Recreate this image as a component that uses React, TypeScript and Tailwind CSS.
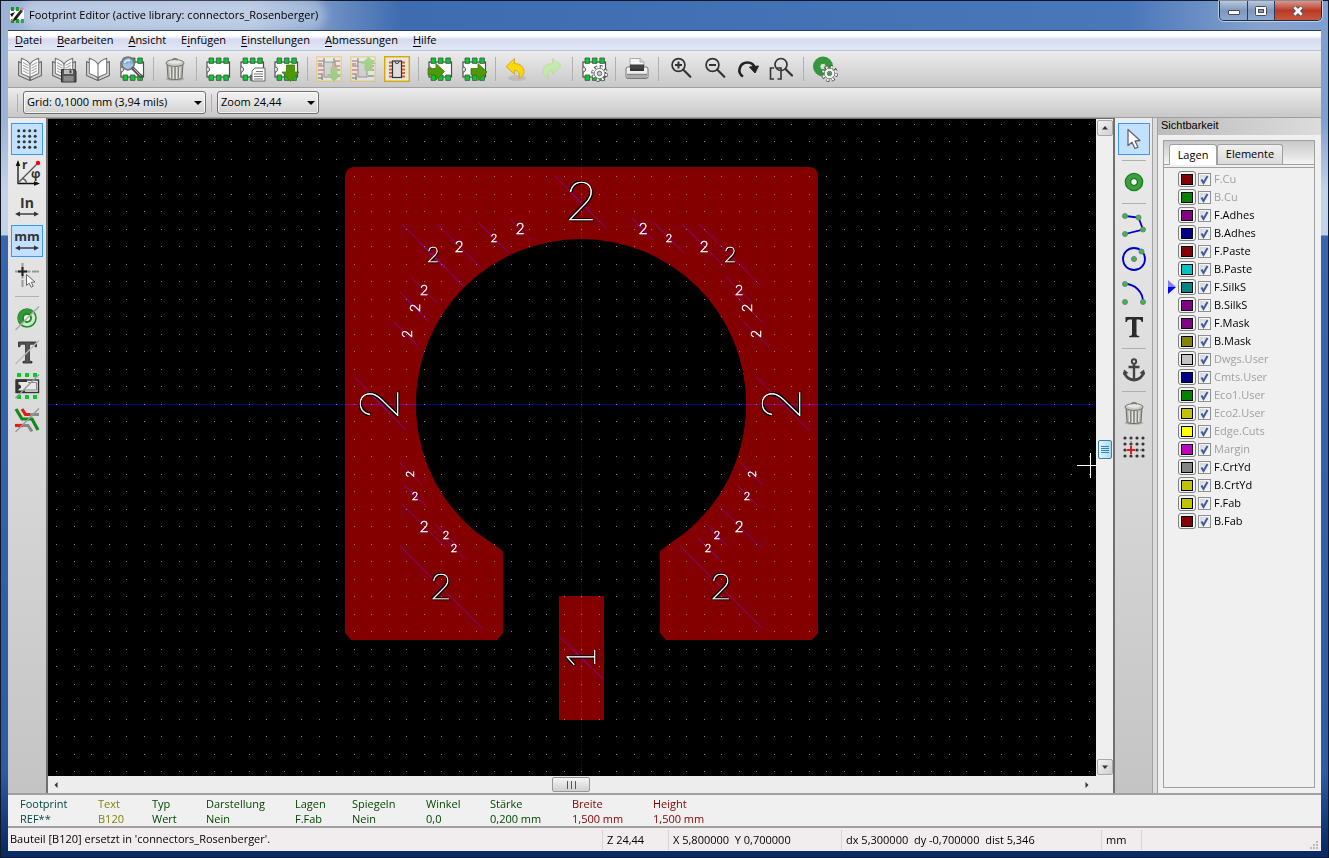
import { useState } from "react";
import type { ReactNode } from "react";
import clsx from "clsx";

/* ---------- icons ---------- */

function Icon({ children, className }: { children: ReactNode; className?: string }) {
  return (
    <svg viewBox="0 0 26 26" className={clsx("h-[26px] w-[26px] shrink-0 overflow-visible", className)} fill="none" aria-hidden="true">
      {children}
    </svg>
  );
}

function ChipShape() {
  return (
    <>
      <rect x="2" y="6" width="22.5" height="15" fill="#fff" stroke="#4d4d4d" strokeWidth="1.2" />
      <path d="M2 11c2 0 2.6 1 2.6 2.3S4 16 2 16" fill="#d8d8d8" stroke="#4d4d4d" />
      <path d="M4 2h4.6v5.4H4zM11.4 2H16v5.4h-4.6zM18.8 2h4.6v5.4h-4.6zM4 19h4.6v5.4H4zM11.4 19H16v5.4h-4.6zM18.8 19h4.6v5.4h-4.6z" fill="#00cc2a" stroke="#4d4d4d" strokeWidth="0.8" />
    </>
  );
}

function BookShape({ lines = false }: { lines?: boolean }) {
  return (
    <>
      <path d="M1.6 5.5 12.8 11v13.5L1.6 19.5zM24.4 5.5 13.2 11v13.5l11.2-5z" fill="#d8d8d8" stroke="#666" strokeWidth="1.1" strokeLinejoin="round" />
      <path d="M4.3 2.2C7 3.500 11 4 13 8.500V22C10.500 19.500 7 18.500 4.300 17.500zM21.700 2.200C19 3.500 15 4 13 8.500V22c2.500-2.500 6-3.500 8.700-4.500z" fill="#fff" stroke="#777" strokeWidth="1.1" strokeLinejoin="round" />
      {lines && (
        <path d="m6 6.500 5.500 3M6 9.300l5.500 3M6 12l5.500 3M6 14.700l5.500 3M20 6.500l-5.500 3M20 9.300l-5.500 3M20 12l-5.500 3M20 14.700l-5.500 3" stroke="#aaa" strokeWidth="1.100" />
      )}
    </>
  );
}

function TrashShape() {
  return (
    <>
      <ellipse cx="13" cy="23" rx="9.5" ry="1.8" fill="#888" opacity=".5" />
      <path d="M5 7.500 6 22c1 2 13 2 14 0l1-14.500z" fill="#b0b0a9" stroke="#6d6d68" />
      <path d="M8 10.500 8.500 22M11.300 11l.2 12M14.800 11l-.2 12M18 10.500 17.500 22" stroke="#e4e4e0" strokeWidth="1.300" />
      <path d="M9.700 11v11.500M13 11v12M16.400 11v11.500" stroke="#777" strokeWidth="1" />
      <ellipse cx="13" cy="7" rx="9" ry="3.400" fill="#cacac4" stroke="#74746f" />
      <ellipse cx="13" cy="6" rx="6.500" ry="1.800" fill="#e6e6e2" />
      <path d="M10.500 4.200c0-2 5-2 5 0" stroke="#777" strokeWidth="1.200" />
    </>
  );
}

function GearShape({ x, y }: { x: number; y: number }) {
  return (
    <g transform={`translate(${x} ${y})`}>
      <circle r="6.600" stroke="#555" strokeWidth="3.600" strokeDasharray="3 2.184" />
      <circle r="6.300" stroke="#f4f4f4" strokeWidth="2.600" strokeDasharray="1.900 3.048" strokeDashoffset="-.5" />
      <circle r="5" fill="#f4f4f4" stroke="#666" strokeWidth="1" />
      <circle r="4.800" fill="#f4f4f4" />
      <circle r="2.200" fill="#c8c8c8" stroke="#666" />
    </g>
  );
}

const greenArrow = { fill: "#4e9a06", stroke: "#3c7a04", strokeWidth: 0.8 };

function ModuleShape() {
  return (
    <>
      <rect x=".8" y=".8" width="24.400" height="24.400" fill="#f3f1e8" stroke="#e5c14d" strokeWidth="1.400" />
      <path d="M2 5h6v5H2M2 14h6M2 18h4v6M24 5h-5v5h5M24 14h-6" stroke="#c83737" strokeWidth="1.600" />
      <path d="M2 8h4M2 22h5M18 2v5M24 20h-6M8 2v3" stroke="#217844" strokeWidth="1.400" />
      <rect x="8" y="6" width="9" height="15" fill="#ccc" stroke="#555" />
    </>
  );
}

function Loupe({ children }: { children?: ReactNode }) {
  return (
    <Icon>
      <circle cx="11.500" cy="9" r="6.400" stroke="#333" strokeWidth="1.700" />
      <path d="m16.300 13.800 7 7" stroke="#333" strokeWidth="2.200" strokeLinecap="round" />
      {children}
    </Icon>
  );
}

const icons = {
  bookOpen: <Icon><BookShape lines /></Icon>,
  bookSave: (
    <Icon>
      <BookShape lines />
      <path d="M10.500 13.500h13.200L25 15v11H10.500z" fill="#555" stroke="#2e2e2e" />
      <path d="M13 13.500h9v4.500h-9z" fill="#bbb" />
      <path d="M18.500 14.200h2v3h-2z" fill="#444" />
      <path d="M12.500 20h10v5.500h-10z" fill="#8a8a8a" />
    </Icon>
  ),
  bookNew: <Icon><BookShape /></Icon>,
  browse: (
    <Icon>
      <ChipShape />
      <circle cx="9" cy="7.500" r="6.300" fill="#8fb8e0" fillOpacity=".85" stroke="#777" strokeWidth="1.700" />
      <path d="M5.500 7c.5-2.600 4-3.400 5.500-2" stroke="#e8f2fc" strokeWidth="1.500" />
      <path d="m14 12.500 8 8" stroke="#555" strokeWidth="3.400" strokeLinecap="round" />
      <path d="m14.500 12.500 7 7" stroke="#bbb" strokeWidth="1" />
    </Icon>
  ),
  trash: <Icon><TrashShape /></Icon>,
  chip: <Icon><ChipShape /></Icon>,
  chipDoc: (
    <Icon>
      <ChipShape />
      <path d="M16 12h10v13H13V15z" fill="#fff" stroke="#666" />
      <path d="M17 15.500h7M15 18h9M15 20.500h9M15 23h9" stroke="#777" />
    </Icon>
  ),
  chipDown: <Icon><ChipShape /><path d="M13.500 9h8v7H26L17.500 25.500 9 16h4.500z" {...greenArrow} /></Icon>,
  loadBoard: (
    <Icon className="opacity-50">
      <ModuleShape />
      <path d="M14.500 11h7v7h4L18 25.500 10.500 18h4z" fill="#6fc437" />
    </Icon>
  ),
  saveBoard: (
    <Icon className="opacity-50">
      <ModuleShape />
      <path d="M14.500 15h8V8H26L18.500.5 11 8h3.500z" fill="#6fc437" />
    </Icon>
  ),
  module: (
    <Icon>
      <rect x=".7" y=".7" width="24.600" height="24.600" fill="#e8e6de" stroke="#d4aa00" strokeWidth="1.400" />
      <path d="M5 6.500h3.500M5 10h3.500M5 13.500h3.500M5 17h3.500M5 20.500h3.500M17.500 6.500H21M17.500 10H21M17.500 13.500H21M17.500 17H21M17.500 20.500H21" stroke="#e0602c" strokeWidth="2" />
      <rect x="8.500" y="5" width="9" height="16.500" fill="#ddd" stroke="#333" strokeWidth="1.200" />
      <path d="M11 5.500a2 2 0 0 0 4 0" stroke="#333" />
    </Icon>
  ),
  chipIn: <Icon><ChipShape /><path d="M1 12.500h8V7.500l8.500 8L9 24v-5H1z" {...greenArrow} /></Icon>,
  chipOut: <Icon><ChipShape /><path d="M10 12.500h7V7.500l9 8.500-9 8.500V19h-7z" {...greenArrow} /></Icon>,
  undo: (
    <Icon>
      <ellipse cx="13" cy="22" rx="9" ry="3" fill="#999" opacity=".35" />
      <path d="M2 10.500 10.500 2.500v5c6 .3 9.500 3.500 9.500 8 0 3-2 5.500-5.500 7 1.500-2 1.500-8-4-8.200v4z" fill="#f5d90a" stroke="#d9a82e" strokeLinejoin="round" />
    </Icon>
  ),
  redo: (
    <Icon className="opacity-60">
      <path d="M23 9.500 14.500 2.500v5C8.500 7.800 5 11 5 15.500c0 3 2 5.500 5.500 7C9 20.500 9 14.500 14.500 14.300v3.500z" fill="#b5f58c" stroke="#a0dd80" strokeLinejoin="round" />
    </Icon>
  ),
  chipGear: <Icon><ChipShape /><GearShape x={18.5} y={17.5} /></Icon>,
  print: (
    <Icon>
      <path d="M6 11V2.500h10l4 3.500v5z" fill="#f6f6f6" stroke="#aaa" />
      <path d="M16 2.500V6h4" stroke="#aaa" fill="#ddd" />
      <rect x="2" y="11" width="22" height="11.500" rx="2" fill="#eee" stroke="#777" />
      <path d="M6 8.500h14V15H6z" fill="#333" />
      <path d="M6.500 10h13M6.500 12h13" stroke="#666" strokeWidth=".7" />
      <path d="M3 18.500h20v3.500H3z" fill="#aaa" />
      <path d="M3 18.300h20" stroke="#777" />
    </Icon>
  ),
  zoomIn: <Loupe><path d="M8 9h7M11.500 5.500v7" stroke="#333" strokeWidth="2" /></Loupe>,
  zoomOut: <Loupe><path d="M8 9h7" stroke="#333" strokeWidth="2" /></Loupe>,
  redraw: (
    <Icon>
      <path d="M8 20.500C1.500 16.500 4.500 6.500 12.500 6.500c4 0 6.500 2 7.500 6" stroke="#222" strokeWidth="2.600" />
      <path d="m14.500 11 9-1-3.500 7z" fill="#222" stroke="#222" />
    </Icon>
  ),
  zoomFit: (
    <Icon>
      <circle cx="12" cy="8.500" r="6" stroke="#333" strokeWidth="1.700" />
      <path d="m16.500 13 6.500 6.500" stroke="#333" strokeWidth="2.200" strokeLinecap="round" />
      <path d="M5 12H1.500v11H5M8 12h4v11H8.500" stroke="#333" strokeWidth="1.600" />
    </Icon>
  ),
  padGear: (
    <Icon>
      <circle cx="11" cy="10.500" r="6.500" stroke="#35963c" strokeWidth="7" />
      <circle cx="11" cy="10.500" r="3.200" fill="#cfe8cf" stroke="#35963c" />
      <GearShape x={17.5} y={17.5} />
      <circle cx="17.500" cy="17.500" r="1.500" fill="#35963c" />
    </Icon>
  ),
  grid: (
    <Icon>
      {[5, 10.5, 16, 21.5].flatMap((y) =>
        [5, 10.5, 16, 21.5].map((x) => <circle key={`${x}-${y}`} cx={x - 0.3} cy={y - 0.3} r="1.500" fill="#333" />),
      )}
    </Icon>
  ),
  polar: (
    <Icon>
      <path d="M4 2v21.500h20" stroke="#111" strokeWidth="1.300" />
      <path d="M4 0 1.700 6h4.600zM26 23.500l-6-2.300v4.600z" fill="#111" />
      <path d="M4 23 22.500 4.500M8 18.500c2.500.5 4.300 2.300 4.500 5" stroke="#555" strokeWidth="1.300" />
      <circle cx="24" cy="3" r="2.200" fill="#f00" />
      <text x="8" y="9" className="fill-[#333] font-['Open_Sans',sans-serif] text-[12px] font-bold">r</text>
      <text x="17" y="18" className="fill-[#333] font-['Open_Sans',sans-serif] text-[12px] font-bold">φ</text>
    </Icon>
  ),
  inch: (
    <Icon>
      <text x="13" y="14" textAnchor="middle" className="fill-[#333] font-['Open_Sans',sans-serif] text-[14px] font-bold">In</text>
      <path d="M4 20h18" stroke="#333" strokeWidth="1.400" />
      <path d="m1 20 5-2.600v5.200zM25 20l-5-2.600v5.200z" fill="#333" />
    </Icon>
  ),
  mm: (
    <Icon>
      <text x="13" y="13" textAnchor="middle" className="fill-[#333] font-['Open_Sans',sans-serif] text-[13px] font-bold">mm</text>
      <path d="M4 20h18" stroke="#333" strokeWidth="1.400" />
      <path d="m1 20 5-2.600v5.200zM25 20l-5-2.600v5.200z" fill="#333" />
    </Icon>
  ),
  cursorShape: (
    <Icon>
      <path d="M1 9.500h24M8.500 1v24" stroke="#999" strokeWidth="2" strokeDasharray="7 1.500" />
      <path d="M4 9.500h9M8.500 5v9" stroke="#222" strokeWidth="2" />
      <path d="M12.500 12.500v11l2.700-2.300 2 4 2-1-2-4 3.800-.2z" fill="#fff" stroke="#666" />
    </Icon>
  ),
  padOff: (
    <Icon>
      <circle cx="13" cy="13" r="9" fill="#cfe8cf" stroke="#16901c" strokeWidth="1.500" />
      <path d="M6.500 19.500A9 9 0 0 1 19.500 6.500z" fill="#35963c" />
      <circle cx="13" cy="13" r="4" fill="#fff" stroke="#16901c" strokeWidth="2" />
      <path d="M1.500 25 25 1.500" stroke="#aaa" strokeWidth="1.500" />
    </Icon>
  ),
  textOff: (
    <Icon>
      <path d="M4.500 3h18v4.800h-1.300c-.4-2-1-2.600-2.800-2.600h-3V20c0 2 .6 2.400 2.600 2.500V24H9v-1.500c2-.1 2.600-.5 2.600-2.500V5.200h-3c-1.800 0-2.400.6-2.800 2.600H4.500z" fill="#555" stroke="#222" strokeWidth=".8" />
      <path d="M1.500 25 25 1.500" stroke="#bbb" strokeWidth="1.500" />
    </Icon>
  ),
  edgeOff: (
    <Icon>
      <path d="M3 0h4v4H3zM11 0h4v4h-4zM19 0h4v4h-4zM3 22h4v4H3zM11 22h4v4h-4zM19 22h4v4h-4z" fill="#00cc2a" />
      <rect x="2" y="7" width="22.500" height="12.500" fill="#e8e8e8" stroke="#333" strokeWidth="1.400" />
      <path d="M2 6.500h11V9H4.500v2.500c3.500 0 3.500 4.500 0 4.500v1.500H11v2H2z" fill="#333" />
      <path d="M14 9.500h8.500V17H10" stroke="#888" />
      <path d="M1.500 25 25 1.500" stroke="#999" strokeWidth="1.500" />
    </Icon>
  ),
  tracksOff: (
    <Icon>
      <path d="m2 2 6 10h10l6 11" stroke="#128a18" strokeWidth="3.200" />
      <path d="m8 2 3.500 5.500H16" stroke="#e21b1b" strokeWidth="3.200" />
      <path d="M16 7.500h9" stroke="#888" strokeWidth="3" />
      <path d="M1 18.500h8" stroke="#e21b1b" strokeWidth="3.200" />
      <path d="M9 18.500h5l4 6" stroke="#888" strokeWidth="3" />
      <path d="M1.500 25 25 1.500" stroke="#999" strokeWidth="1.500" />
    </Icon>
  ),
  pointer: (
    <Icon>
      <path d="M7 3.500v16l4-3.300 3 6.300 3-1.300-3-6.200 5-.5z" fill="#fff" stroke="#666" strokeWidth="1.300" strokeLinejoin="round" />
    </Icon>
  ),
  pad: (
    <Icon>
      <circle cx="13" cy="13" r="6" stroke="#16801c" strokeWidth="6.600" />
      <circle cx="13" cy="13" r="6" stroke="#3f9e43" strokeWidth="4" />
      <circle cx="13" cy="13" r="2.400" fill="#fff" />
    </Icon>
  ),
  polygon: (
    <Icon>
      <path d="m4 4 13.500 1.500L22 17.500 4 22" stroke="#00c" strokeWidth="1.800" />
      {[[4, 4], [17.5, 5.5], [22, 17.5], [4, 22]].map(([x, y]) => (
        <circle key={y} cx={x} cy={y} r="2.500" fill="#2fbf4a" stroke="#777" strokeWidth=".9" />
      ))}
    </Icon>
  ),
  circle: (
    <Icon>
      <circle cx="13" cy="13" r="11" stroke="#00c" strokeWidth="1.800" />
      <circle cx="13" cy="13" r="2.500" fill="#2fbf4a" stroke="#777" />
      <circle cx="20.500" cy="5.500" r="2.500" fill="#2fbf4a" stroke="#777" />
    </Icon>
  ),
  arc: (
    <Icon>
      <path d="M4 4c10 0 18 8 18 18" stroke="#00c" strokeWidth="1.800" />
      {[[4, 4], [22, 22], [4, 22]].map(([x, y]) => (
        <circle key={`${x}-${y}`} cx={x} cy={y} r="2.500" fill="#2fbf4a" stroke="#777" strokeWidth=".9" />
      ))}
    </Icon>
  ),
  text: (
    <Icon>
      <path d="M4.500 3h17.500v5h-1.400c-.5-2-1-2.600-2.800-2.600h-2.300V19.500c0 2 .5 2.400 2.800 2.500v1.300H8.200V22c2.300-.1 2.800-.5 2.800-2.500V5.400H8.700c-1.800 0-2.300.6-2.800 2.600H4.500z" fill="#2b2b2b" />
    </Icon>
  ),
  anchor: (
    <Icon>
      <circle cx="13" cy="4.500" r="2.200" stroke="#444" strokeWidth="1.900" />
      <path d="M13 7v16M7.500 10h11" stroke="#444" strokeWidth="2.400" />
      <path d="M3.500 15c.8 5 5 8 9.500 8s8.700-3 9.500-8" stroke="#444" strokeWidth="2.800" />
      <path d="m2 18 1-5.500L7.500 16zM24 18l-1-5.500L18.500 16z" fill="#444" />
    </Icon>
  ),
  gridOrigin: (
    <Icon>
      {[4, 10, 16, 22].flatMap((y) =>
        [4, 10, 16, 22].map((x) => <circle key={`${x}-${y}`} cx={x} cy={y} r="1.600" fill="#333" />),
      )}
      <path d="M10 4v16M10 16h12" stroke="#555" strokeWidth="1" strokeDasharray="1 2" />
      <path d="M6 16h8M10 12v8" stroke="#e21b1b" strokeWidth="2" />
    </Icon>
  ),
};

type IconName = keyof typeof icons;
type Tool = { icon: IconName; label: string } | null;

/* ---------- data ---------- */

const menus = ["Datei", "Bearbeiten", "Ansicht", "Einfügen", "Einstellungen", "Abmessungen", "Hilfe"];
// position of the underlined access key in each menu title
const accessKeys = [0, 0, 0, 1, 0, 0, 0];

const mainTools: Tool[] = [
  { icon: "bookOpen", label: "Aktive Bibliothek wählen" },
  { icon: "bookSave", label: "In aktive Bibliothek speichern" },
  { icon: "bookNew", label: "Neue Bibliothek" },
  { icon: "browse", label: "Footprint Betrachter" },
  null,
  { icon: "trash", label: "Bauteil löschen" },
  null,
  { icon: "chip", label: "Neuer Footprint" },
  { icon: "chipDoc", label: "Footprint Assistent" },
  { icon: "chipDown", label: "Footprint laden" },
  null,
  { icon: "loadBoard", label: "Von Platine laden" },
  { icon: "saveBoard", label: "Auf Platine aktualisieren" },
  { icon: "module", label: "Auf Platine einfügen" },
  null,
  { icon: "chipIn", label: "Importieren" },
  { icon: "chipOut", label: "Exportieren" },
  null,
  { icon: "undo", label: "Rückgängig" },
  { icon: "redo", label: "Wiederholen" },
  null,
  { icon: "chipGear", label: "Footprint Eigenschaften" },
  null,
  { icon: "print", label: "Drucken" },
  null,
  { icon: "zoomIn", label: "Vergrößern" },
  { icon: "zoomOut", label: "Verkleinern" },
  { icon: "redraw", label: "Neu zeichnen" },
  { icon: "zoomFit", label: "Zoom automatisch" },
  null,
  { icon: "padGear", label: "Pad Einstellungen" },
];

const leftTools: Tool[] = [
  { icon: "grid", label: "Raster" },
  { icon: "polar", label: "Polarkoordinaten" },
  { icon: "inch", label: "Zoll" },
  { icon: "mm", label: "Millimeter" },
  { icon: "cursorShape", label: "Cursorform" },
  null,
  { icon: "padOff", label: "Pads umrisshaft" },
  { icon: "textOff", label: "Texte umrisshaft" },
  { icon: "edgeOff", label: "Kanten umrisshaft" },
  { icon: "tracksOff", label: "Kontrastmodus" },
];

const rightTools: Tool[] = [
  { icon: "pointer", label: "Auswahl" },
  null,
  { icon: "pad", label: "Pad hinzufügen" },
  null,
  { icon: "polygon", label: "Linie" },
  { icon: "circle", label: "Kreis" },
  { icon: "arc", label: "Bogen" },
  { icon: "text", label: "Text" },
  null,
  { icon: "anchor", label: "Anker" },
  null,
  { icon: "trash", label: "Löschen" },
  { icon: "gridOrigin", label: "Rasterursprung" },
];

const layers = [
  { name: "F.Cu", color: "bg-[#840000]", dim: true },
  { name: "B.Cu", color: "bg-[#008400]", dim: true },
  { name: "F.Adhes", color: "bg-[#840084]" },
  { name: "B.Adhes", color: "bg-[#000084]" },
  { name: "F.Paste", color: "bg-[#840000]" },
  { name: "B.Paste", color: "bg-[#00c2c2]" },
  { name: "F.SilkS", color: "bg-[#008484]" },
  { name: "B.SilkS", color: "bg-[#840084]" },
  { name: "F.Mask", color: "bg-[#840084]" },
  { name: "B.Mask", color: "bg-[#848400]" },
  { name: "Dwgs.User", color: "bg-[#c2c2c2]", dim: true },
  { name: "Cmts.User", color: "bg-[#000084]", dim: true },
  { name: "Eco1.User", color: "bg-[#008400]", dim: true },
  { name: "Eco2.User", color: "bg-[#c2c200]", dim: true },
  { name: "Edge.Cuts", color: "bg-[#ffff00]", dim: true },
  { name: "Margin", color: "bg-[#c200c2]", dim: true },
  { name: "F.CrtYd", color: "bg-[#848484]" },
  { name: "B.CrtYd", color: "bg-[#c2c200]" },
  { name: "F.Fab", color: "bg-[#c2c200]" },
  { name: "B.Fab", color: "bg-[#840000]" },
];

const messages = [
  { label: "Footprint", value: "REF**", className: "w-[78px] text-[#004848]" },
  { label: "Text", value: "B120", className: "w-[54px] text-[#848400]" },
  { label: "Typ", value: "Wert", className: "w-[54px] text-[#004800]" },
  { label: "Darstellung", value: "Nein", className: "w-[89px] text-[#004800]" },
  { label: "Lagen", value: "F.Fab", className: "w-[57px] text-[#004800]" },
  { label: "Spiegeln", value: "Nein", className: "w-[74px] text-[#004800]" },
  { label: "Winkel", value: "0,0", className: "w-[64px] text-[#004800]" },
  { label: "Stärke", value: "0,200 mm", className: "w-[82px] text-[#004800]" },
  { label: "Breite", value: "1,500 mm", className: "w-[81px] text-[#840000]" },
  { label: "Height", value: "1,500 mm", className: "w-[82px] text-[#840000]" },
];

// diagonal "no net" marks across each pad: x1, y1, x2, y2
const netMarks = [
  [555, 176, 607, 229], [402, 224, 463, 286], [437, 224, 481, 268], [478, 222, 509, 253], [509, 218, 531, 240],
  [411, 277, 437, 303], [400, 292, 430, 323], [393, 321, 419, 347], [354, 377, 406, 430],
  [632, 218, 653, 240], [653, 222, 684, 253], [682, 224, 726, 268], [699, 224, 761, 286],
  [726, 277, 752, 303], [732, 292, 763, 323], [743, 321, 769, 347], [756, 377, 809, 430],
  [400, 463, 422, 485], [404, 485, 426, 506], [402, 504, 446, 548], [435, 524, 457, 546], [443, 537, 465, 559], [400, 546, 483, 629],
  [741, 463, 763, 485], [737, 485, 758, 506], [717, 504, 761, 548], [706, 524, 727, 546], [697, 537, 719, 559], [680, 546, 763, 629],
  [559, 636, 603, 679],
];

// pad numbers: centre, digit height, turned or not
const padNumbers: { n: string; x: number; y: number; h: number; turned?: boolean }[] = [
  { n: "2", x: 581, y: 201, h: 38 },
  { n: "2", x: 379, y: 404, h: 38, turned: true },
  { n: "2", x: 781, y: 404, h: 38, turned: true },
  { n: "2", x: 441, y: 586, h: 26 },
  { n: "2", x: 721, y: 586, h: 26 },
  { n: "1", x: 581, y: 658, h: 28, turned: true },
  { n: "2", x: 433, y: 254, h: 15 },
  { n: "2", x: 730, y: 254, h: 15 },
  { n: "2", x: 459, y: 246, h: 11 },
  { n: "2", x: 704, y: 246, h: 11 },
  { n: "2", x: 494, y: 238, h: 8 },
  { n: "2", x: 669, y: 238, h: 8 },
  { n: "2", x: 520, y: 228, h: 11 },
  { n: "2", x: 643, y: 228, h: 11 },
  { n: "2", x: 424, y: 290, h: 10 },
  { n: "2", x: 739, y: 290, h: 10 },
  { n: "2", x: 415, y: 308, h: 10, turned: true },
  { n: "2", x: 747, y: 308, h: 10, turned: true },
  { n: "2", x: 407, y: 334, h: 9, turned: true },
  { n: "2", x: 756, y: 334, h: 9, turned: true },
  { n: "2", x: 410, y: 474, h: 8, turned: true },
  { n: "2", x: 752, y: 474, h: 8, turned: true },
  { n: "2", x: 415, y: 496, h: 8 },
  { n: "2", x: 747, y: 496, h: 8 },
  { n: "2", x: 424, y: 526, h: 11 },
  { n: "2", x: 739, y: 526, h: 11 },
  { n: "2", x: 446, y: 535, h: 8 },
  { n: "2", x: 717, y: 535, h: 8 },
  { n: "2", x: 454, y: 548, h: 8 },
  { n: "2", x: 708, y: 548, h: 8 },
];

/* ---------- parts ---------- */

function TitleBar() {
  return (
    <header className="flex h-[30px] shrink-0 items-start justify-between pl-2 pr-[6px]">
      <div className="flex h-7 items-center gap-1">
        <svg viewBox="0 0 16 16" className="h-4 w-4" aria-hidden="true">
          <rect x="1" y="3" width="14" height="10" fill="#fff" />
          <path d="M2 0h3v4H2zM7 0h3v4H7zM2 12h3v4H2zM7 12h3v4H7zM12 12h3v4h-3z" fill="#0a9a2a" />
          <path d="M1 7l5-2-3 5zM12 2l2 2-7 9-3 1 1-3z" fill="#111" />
          <path d="m11 2 2-2 2 2-2 2z" fill="#e86aa8" />
          <path d="m1 15 3-4 1 1z" fill="#e0b050" />
        </svg>
        <h1 className="rounded-full bg-white/30 text-[11px] text-black shadow-[0_0_10px_8px_rgba(255,255,255,0.3)]">
          Footprint Editor (active library: connectors_Rosenberger)
        </h1>
      </div>
      <div className="flex h-5 overflow-hidden rounded-b-[5px] border border-t-0 border-[#1c2c4a] shadow-[0_0_0_1px_rgba(255,255,255,0.5)]">
        <button aria-label="Minimieren" className="flex w-7 items-center justify-center border-r border-[#2a3d60] bg-linear-to-b from-[#b9c9e0] via-[#7d97be] to-[#8ea9cf]">
          <span className="mt-1 h-[5px] w-3 rounded-[1px] border border-[#4a4a5a] bg-white" />
        </button>
        <button aria-label="Maximieren" className="flex w-[27px] items-center justify-center border-r border-[#2a3d60] bg-linear-to-b from-[#b9c9e0] via-[#7d97be] to-[#8ea9cf]">
          <svg viewBox="0 0 12 10" className="h-[10px] w-3" aria-hidden="true">
            <rect x=".5" y=".5" width="11" height="9" rx="1" fill="#fff" stroke="#4a4a5a" />
            <rect x="3.500" y="3.500" width="5" height="3" fill="#7d97be" stroke="#4a4a5a" />
          </svg>
        </button>
        <button aria-label="Schließen" className="flex w-[46px] items-center justify-center bg-linear-to-b from-[#d9968a] via-[#b83a26] to-[#c9573f]">
          <svg viewBox="0 0 12 10" className="h-[10px] w-3" aria-hidden="true">
            <path d="m2 1 8 8M10 1 2 9" stroke="#4a4a5a" strokeWidth="4.500" />
            <path d="m2.300 1.300 7.400 7.400M9.700 1.300 2.300 8.700" stroke="#fff" strokeWidth="2.800" />
          </svg>
        </button>
      </div>
    </header>
  );
}

function MenuBar() {
  return (
    <nav className="flex h-5 shrink-0 items-center gap-[15px] border-b border-[#b8c0d4] bg-linear-to-b from-white from-25% via-[#d6dcef] via-45% to-[#e2e8f6] px-[7px]">
      {menus.map((menu, i) => (
        <button key={menu}>
          {menu.slice(0, accessKeys[i])}
          <span className="underline underline-offset-2">{menu[accessKeys[i]]}</span>
          {menu.slice(accessKeys[i] + 1)}
        </button>
      ))}
    </nav>
  );
}

function Toolbar({ tools, vertical, active = [] }: { tools: Tool[]; vertical?: boolean; active?: IconName[] }) {
  return (
    <div role="toolbar" className={clsx("flex items-center", vertical && "flex-col")}>
      {tools.map((tool, i) =>
        tool ? (
          <button
            key={tool.icon}
            title={tool.label}
            aria-label={tool.label}
            className={clsx(
              "m-px flex h-8 w-8 items-center justify-center border",
              active.includes(tool.icon) ? "border-[#3399ff] bg-[#c2e0ff]" : "border-transparent",
            )}
          >
            {icons[tool.icon]}
          </button>
        ) : (
          <span key={i} className={vertical ? "my-1 h-px w-6 bg-[#b0b0b0]" : "mx-1 h-6 w-px bg-[#b0b0b0]"} />
        ),
      )}
    </div>
  );
}

function Dropdown({ label, options, className }: { label: string; options: string[]; className: string }) {
  return (
    <label className={clsx("relative block", className)}>
      <select
        aria-label={label}
        className="block h-[23px] w-full appearance-none rounded-[3px] border border-[#707070] bg-linear-to-b from-[#f4f4f4] to-[#d2d2d2] pl-[3px] text-[11px] shadow-[inset_0_0_0_1px_rgba(255,255,255,0.7)]"
      >
        {options.map((option) => (
          <option key={option}>{option}</option>
        ))}
      </select>
      <svg viewBox="0 0 8 4" className="pointer-events-none absolute right-1 top-[10px] h-1 w-2" aria-hidden="true">
        <path d="M0 0h8L4 4z" fill="#000" />
      </svg>
    </label>
  );
}

function PadNumber({ n, x, y, h, turned }: (typeof padNumbers)[number]) {
  return (
    <g
      transform={`translate(${x} ${y})${turned ? " rotate(-90)" : ""}`}
      className={clsx(
        h > 20 && "[filter:drop-shadow(1px_1px_0_#000)_drop-shadow(-1px_-1px_0_#000)]",
        h > 12 && h <= 20 && "[filter:drop-shadow(1px_1px_0_#000)]",
      )}
    >
      <text
        y={h / 2}
        textAnchor="middle"
        fontSize={Math.round(h / 0.72)}
        stroke="#fff"
        strokeWidth={h > 12 ? 0.6 : 0.4}
        className={clsx("fill-white font-['Lato',sans-serif]", h > 12 ? "font-extralight" : "font-light")}
      >
        {n}
      </text>
    </g>
  );
}

function Canvas() {
  return (
    <svg className="block min-h-0 min-w-0 flex-1 bg-black" role="img" aria-label="Footprint">
      <svg x="50%" overflow="visible">
        <g transform="translate(-572 -119)">
          <defs>
            <pattern id="dots" x="581" y="404" width="35" height="35" patternUnits="userSpaceOnUse">
              <path d="M0 0h1v1H0zM18 0h1v1h-1zM0 17h1v1H0zM18 17h1v1h-1z" fill="#848484" />
            </pattern>
          </defs>
          <g fill="#840000">
            <path d="M353 167H810Q818 168 818 176V633L812 640H666L660 633V551L664 548L686 532A165 165 0 1 0 476 532L499 548L503 552V633L497 640H351L345 633V176Q346 168 353 167Z" />
            <path d="M559 596h45v124h-45z" />
          </g>
          {/* closes the antenna cut-out to a true circle round the origin */}
          <circle cx="581" cy="404" r="165" fill="#000" />
          <g className="mix-blend-screen" stroke="#000084" shapeRendering="crispEdges">
            <path d="M-2000 404.500H4000" />
            <path d="M581.500-2000V4000" strokeDasharray="3 1" />
          </g>
          <g stroke="#840084" strokeWidth="1" shapeRendering="crispEdges">
            {netMarks.map(([x1, y1, x2, y2]) => (
              <path key={`${x1}-${y1}`} d={`M${x1} ${y1}L${x2} ${y2}`} />
            ))}
          </g>
          <rect x="-2000" y="-2000" width="6000" height="6000" fill="url(#dots)" />
          {padNumbers.map((pad) => (
            <PadNumber key={`${pad.x}-${pad.y}`} {...pad} />
          ))}
          <path d="M1077 465.500h26M1090.500 453v25" stroke="#fff" shapeRendering="crispEdges" />
        </g>
      </svg>
    </svg>
  );
}

function Arrow({ d }: { d: string }) {
  return (
    <svg viewBox="0 0 8 8" className="h-2 w-2" aria-hidden="true">
      <path d={d} fill="#333" />
    </svg>
  );
}

const scrollButton = "flex h-4 w-4 shrink-0 items-center justify-center rounded-[2px] border border-[#a8a8a8] bg-linear-to-br from-[#f4f4f4] to-[#cfcfcf]";

function VerticalScroll() {
  return (
    <div className="flex w-[17px] shrink-0 flex-col items-center bg-[#efefef] py-px">
      <button aria-label="Nach oben" className={scrollButton}><Arrow d="M1 5.500 4 2l3 3.500z" /></button>
      <div className="flex flex-1 flex-col items-center justify-center">
        <div className="mt-[3px] flex h-[19px] w-[14px] flex-col items-center justify-center gap-px rounded-[2px] border border-[#3c7fb1] bg-linear-to-r from-[#e3f4fc] to-[#a8dbf5]">
          <span className="h-px w-2 bg-[#3c7fb1]" />
          <span className="h-px w-2 bg-[#3c7fb1]" />
          <span className="h-px w-2 bg-[#3c7fb1]" />
          <span className="h-px w-2 bg-[#3c7fb1]" />
        </div>
      </div>
      <button aria-label="Nach unten" className={scrollButton}><Arrow d="M1 2.500h6L4 6z" /></button>
    </div>
  );
}

function HorizontalScroll() {
  return (
    <div className="flex h-[17px] shrink-0 items-center bg-[#ededed] pr-[18px]">
      <button aria-label="Nach links" className="flex w-4 justify-center"><Arrow d="M5.500 1v6L2.500 4z" /></button>
      <div className="flex flex-1 justify-center">
        <div className="flex h-[15px] w-[38px] items-center justify-center gap-px rounded-[2px] border border-[#979797] bg-linear-to-b from-[#f5f5f5] to-[#d0d0d0]">
          <span className="h-2 w-px bg-[#555]" />
          <span className="h-2 w-px bg-[#ddd]" />
          <span className="h-2 w-px bg-[#555]" />
          <span className="h-2 w-px bg-[#ddd]" />
          <span className="h-2 w-px bg-[#555]" />
        </div>
      </div>
      <button aria-label="Nach rechts" className="flex w-[17px] justify-center"><Arrow d="M2.500 1v6l3-3z" /></button>
    </div>
  );
}

function LayerPanel() {
  const [selected, setSelected] = useState("F.SilkS");
  return (
    <aside className="flex w-[164px] shrink-0 flex-col border-l border-[#a0a0a0] bg-[#f0f0f0]">
      <h2 className="h-[17px] shrink-0 bg-linear-to-r from-[#bcbcbc] to-[#dcdcdc] pl-[3px] font-['Liberation_Sans',sans-serif] text-[11px] leading-[15px]">
        Sichtbarkeit
      </h2>
      <div className="mb-[5px] ml-[5px] mr-[6px] mt-[5px] flex flex-1 flex-col border border-[#a0a0a0]">
        <div role="tablist" className="flex h-6 shrink-0 items-end border-b border-[#a0a0a0] bg-linear-to-b from-[#c8c8c8] to-[#f4f4f4] pl-[5px]">
          <button role="tab" aria-selected="true" className="-mb-px h-[21px] w-12 rounded-t-[3px] border border-b-0 border-[#a0a0a0] bg-white">
            Lagen
          </button>
          <button role="tab" aria-selected="false" className="h-5 w-[66px] rounded-t-[3px] border border-b-0 border-[#a0a0a0] bg-linear-to-b from-[#f0f0f0] to-[#dadada]">
            Elemente
          </button>
        </div>
        <ul className="mt-[2px] border-t border-[#a0a0a0] pt-[2px]">
          {layers.map((layer) => (
            <li key={layer.name} className="flex h-[18px] items-center pl-1">
              <svg viewBox="0 0 8 14" className="mr-[2px] h-[14px] w-2" aria-hidden="true">
                {selected === layer.name && (
                  <>
                    <path d="M0 0v7h8z" fill="#8080ff" />
                    <path d="M0 14V7h8z" fill="#00f" />
                  </>
                )}
              </svg>
              <button
                aria-label={`Farbe ${layer.name}`}
                onClick={() => setSelected(layer.name)}
                className="flex h-4 w-[18px] items-center justify-center rounded-[3px] border border-[#808080] bg-[#f2f2f2]"
              >
                <span className={clsx("h-[11px] w-3 border border-black", layer.color)} />
              </button>
              <label className="relative flex items-center">
                <input type="checkbox" defaultChecked className="peer ml-[2px] h-[13px] w-[13px] appearance-none border border-[#8e8f8f] bg-linear-to-br from-[#cdd2d8] to-white shadow-[inset_0_0_0_1px_#f4f4f4]" />
                <svg viewBox="0 0 13 13" className="pointer-events-none absolute left-[2px] hidden h-[13px] w-[13px] peer-checked:block" aria-hidden="true">
                  <path d="m3.500 6.500 2 3.500L9.500 3" stroke="#3f5a9c" strokeWidth="2" fill="none" />
                </svg>
                <span className={clsx("pl-[3px]", layer.dim ? "text-[#a0a0a0]" : "text-black")}>{layer.name}</span>
              </label>
            </li>
          ))}
        </ul>
      </div>
    </aside>
  );
}

function StatusBar() {
  return (
    <footer className="flex h-[23px] shrink-0 items-center bg-[#f1edee] text-[11px]">
      <p className="flex-1 pl-[2px]">Bauteil [B120] ersetzt in 'connectors_Rosenberger'.</p>
      <p className="w-[66px] border-l border-[#d8d4d5] pl-1 leading-5">Z 24,44</p>
      <p className="w-[173px] whitespace-pre border-l border-[#d8d4d5] pl-1 leading-5">X 5,800000  Y 0,700000</p>
      <p className="w-[260px] whitespace-pre border-l border-[#d8d4d5] pl-1 leading-5">dx 5,300000  dy -0,700000  dist 5,346</p>
      <p className="w-10 border-l border-[#d8d4d5] pl-1 leading-5">mm</p>
      <div className="flex h-5 w-[180px] items-end justify-end border-l border-[#d8d4d5] pr-[2px]">
        <svg viewBox="0 0 10 10" className="h-[10px] w-[10px]" aria-hidden="true">
          <path d="M7 1h2v2H7zM4 4h2v2H4zM7 4h2v2H7zM1 7h2v2H1zM4 7h2v2H4zM7 7h2v2H7z" fill="#bbb" />
        </svg>
      </div>
    </footer>
  );
}

export default function App() {
  return (
    <div className="flex h-screen flex-col border border-[#101828] bg-[linear-gradient(to_bottom,transparent_0,transparent_118px,#c3d3ea_190px,#c3d3ea_234px,#3667ae_235px,#2d5ca3_90%,#0a2a66_99%),linear-gradient(to_right,#9cb3d6,#a3b8da_250px,#3f6cb0_400px,#4a77ba_85%,#86a3cc_95%,#7f9fd0)] font-['Open_Sans',sans-serif] text-[11px] text-black">
      <TitleBar />
      <div className="mx-[7px] mb-[6px] -mt-px flex min-h-0 flex-1 flex-col border-t border-[#2b3d5c] bg-[#f0f0f0]">
        <MenuBar />
        <div className="flex h-[37px] shrink-0 items-center border-b border-[#a0a0a0] bg-linear-to-b from-[#ececec] to-[#c8c8c8] pl-[5px]">
          <Toolbar tools={mainTools} />
        </div>
        <div className="flex h-[30px] shrink-0 items-center border-b border-[#a0a0a0] bg-linear-to-b from-[#ececec] to-[#c8c8c8] pl-[9px]">
          <span className="mr-[5px] h-[18px] w-px bg-[#b0b0b0]" />
          <Dropdown label="Raster" className="w-[183px]" options={["Grid: 0,1000 mm (3,94 mils)"]} />
          <span className="mx-[5px] h-[18px] w-px bg-[#b0b0b0]" />
          <Dropdown label="Zoom" className="w-[102px]" options={["Zoom 24,44"]} />
        </div>

        <main className="flex min-h-0 flex-1 bg-[#e0e0e0]">
          <div className="w-[38px] shrink-0 bg-linear-to-b from-[#ececec] to-[#c4c4c4] pt-1">
            <Toolbar vertical tools={leftTools} active={["grid", "mm"]} />
          </div>
          <section className="flex min-w-0 flex-1 flex-col border-x-2 border-t border-[#707070]">
            <div className="flex min-h-0 flex-1">
              <Canvas />
              <VerticalScroll />
            </div>
            <HorizontalScroll />
          </section>
          <div className="w-[38px] shrink-0 border-r border-[#a0a0a0] bg-linear-to-b from-[#ececec] to-[#c4c4c4] pt-1">
            <Toolbar vertical tools={rightTools} active={["pointer"]} />
          </div>
          <div className="w-1 shrink-0 bg-[#dcdcdc]" />
          <LayerPanel />
        </main>

        <dl className="flex h-[35px] shrink-0 border-y-2 border-[#a0a0a0] pl-3 pt-px leading-[15px]">
          {messages.map((message) => (
            <div key={message.label} className={clsx("whitespace-nowrap", message.className)}>
              <dt>{message.label}</dt>
              <dd>{message.value}</dd>
            </div>
          ))}
        </dl>
        <StatusBar />
      </div>
    </div>
  );
}
